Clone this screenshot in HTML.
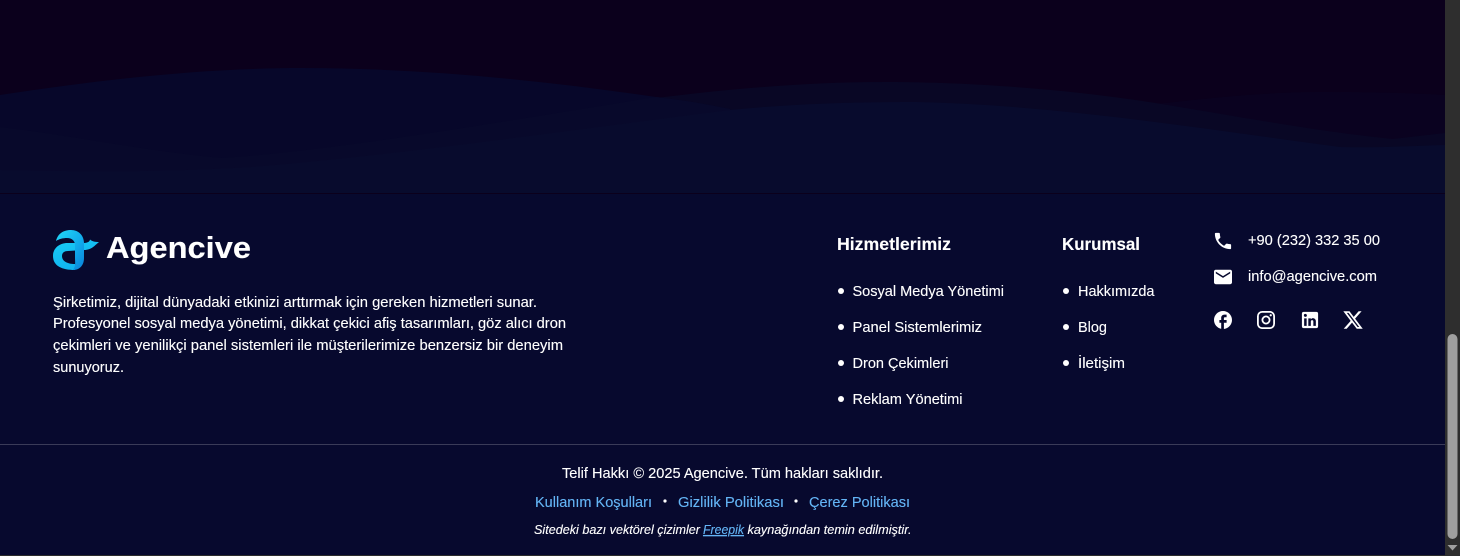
<!DOCTYPE html>
<html lang="tr">
<head>
<meta charset="utf-8">
<title>Agencive</title>
<style>
html,body{margin:0;padding:0;width:1460px;height:556px;overflow:hidden;background:#07092e}
svg{display:block;position:absolute;left:0;top:0}
text{font-family:"Liberation Sans",sans-serif;fill:#fff;white-space:pre;stroke:#fff;stroke-width:.12px}
.p,.l,.b{font-size:14.4px}
.h{font-size:17.6px;font-weight:700}
.a{fill:#64b5f6;stroke:#64b5f6}
.i{font-size:12.5px;font-style:italic}
</style>
</head>
<body>
<svg width="1460" height="556" viewBox="0 0 1460 556">
<defs>
<linearGradient id="g1" x1="0" y1="0" x2="1" y2="1"><stop offset="0" stop-color="#22d8f8"/><stop offset="0.6" stop-color="#10a8ea"/><stop offset="1" stop-color="#0a80d8"/></linearGradient>
<linearGradient id="g2" x1="0" y1="0" x2="0.6" y2="1"><stop offset="0" stop-color="#19cdf6"/><stop offset="1" stop-color="#0fb0ee"/></linearGradient>
</defs>
<rect width="1445" height="193" fill="#0b001c"/>
<path d="M1100 110C1180 102 1250 92 1320 92C1370 92 1410 93 1445 95V193H1100Z" fill="#0a0220"/>
<path d="M640 100C720 90 800 82 884 82C960 82 1060 88 1149 102C1230 115 1320 132 1393 139L1445 133V193H640Z" fill="#090725"/>
<path d="M0 95C100 80 200 68 302 68C420 68 540 80 656 97C690 101 710 105 730 109L730 193H0Z" fill="#07072a"/>
<path d="M0 127C70 135 150 152 223 158C340 150 500 122 656 97C690 101 710 105 730 109L760 193H0Z" fill="#08092b"/>
<path d="M0 170C90 172 170 172 251 167C400 155 570 130 730 110C790 104 850 102 916 102C1060 105 1210 130 1340 147C1380 148 1410 146 1445 145V193H0Z" fill="#080b2d"/>
<rect y="193" width="1445" height="363" fill="#07092e"/>
<rect y="193" width="1445" height="1" fill="#0b001c"/>
<rect y="444" width="1445" height="1" fill="#3a3b58"/>
<rect y="555" width="1445" height="1" fill="#2c2c2c"/>

<path d="M53 256C53 249 58 244 66 243L84 243C88 243 90 241 90 239.500C92 241.500 95 242 99 242C95 245 92 250 84 250L68 251C64 251 62 253 62 256C62 261 67 264 75 264L75 270C62 270 53 266 53 256Z" fill="url(#g2)"/>
<path d="M56 241C58 233 64 230 71 230C79 230 84 236 84 243L84 258C84 265 80 270 73 270C76 266 75 262 75 258L75 245C75 241 72 238 67 238C63 238 59 239 56 241Z" fill="url(#g1)"/>
<text x="106" y="258" font-size="31" font-weight="700" textLength="145" lengthAdjust="spacingAndGlyphs">Agencive</text>

<text class="p" x="53" y="307" textLength="484" lengthAdjust="spacingAndGlyphs">Şirketimiz, dijital dünyadaki etkinizi arttırmak için gereken hizmetleri sunar.</text>
<text class="p" x="53" y="328" textLength="513" lengthAdjust="spacingAndGlyphs">Profesyonel sosyal medya yönetimi, dikkat çekici afiş tasarımları, göz alıcı dron</text>
<text class="p" x="53" y="350" textLength="510" lengthAdjust="spacingAndGlyphs">çekimleri ve yenilikçi panel sistemleri ile müşterilerimize benzersiz bir deneyim</text>
<text class="p" x="53" y="372" textLength="71" lengthAdjust="spacingAndGlyphs">sunuyoruz.</text>

<text class="h" x="837" y="250" textLength="114" lengthAdjust="spacingAndGlyphs">Hizmetlerimiz</text>
<text class="h" x="1062" y="250" textLength="78" lengthAdjust="spacingAndGlyphs">Kurumsal</text>

<g fill="#fff">
<circle cx="841" cy="291" r="3"/><circle cx="841" cy="327" r="3"/><circle cx="841" cy="363" r="3"/><circle cx="841" cy="399" r="3"/>
<circle cx="1066" cy="291" r="3"/><circle cx="1066" cy="327" r="3"/><circle cx="1066" cy="363" r="3"/>
<circle cx="665" cy="501" r="1.6"/><circle cx="796" cy="501" r="1.6"/>
</g>
<text class="l" x="852.5" y="296" textLength="151.5" lengthAdjust="spacingAndGlyphs">Sosyal Medya Yönetimi</text>
<text class="l" x="852.5" y="332" textLength="129.5" lengthAdjust="spacingAndGlyphs">Panel Sistemlerimiz</text>
<text class="l" x="852.5" y="368" textLength="96" lengthAdjust="spacingAndGlyphs">Dron Çekimleri</text>
<text class="l" x="852.5" y="404" textLength="110" lengthAdjust="spacingAndGlyphs">Reklam Yönetimi</text>
<text class="l" x="1078" y="296" textLength="76.500" lengthAdjust="spacingAndGlyphs">Hakkımızda</text>
<text class="l" x="1078" y="332" textLength="29" lengthAdjust="spacingAndGlyphs">Blog</text>
<text class="l" x="1078" y="368" textLength="47" lengthAdjust="spacingAndGlyphs">İletişim</text>

<text class="l" x="1248" y="245" textLength="132" lengthAdjust="spacingAndGlyphs">+90 (232) 332 35 00</text>
<text class="l" x="1248" y="281" textLength="129" lengthAdjust="spacingAndGlyphs">info@agencive.com</text>

<g fill="#fff">
<path transform="translate(1212.200 230.200) scale(.9)" d="M6.62 10.79c1.44 2.83 3.76 5.14 6.59 6.59l2.2-2.2c.27-.27.67-.36 1.02-.24 1.12.37 2.33.57 3.57.57.55 0 1 .45 1 1V20c0 .55-.45 1-1 1-9.39 0-17-7.61-17-17 0-.55.45-1 1-1h3.5c.55 0 1 .45 1 1 0 1.25.2 2.45.57 3.57.11.35.03.74-.25 1.02l-2.2 2.2z"/>
<path transform="translate(1212.200 266.200) scale(.9)" d="M20 4H4c-1.1 0-1.99.9-1.99 2L2 18c0 1.1.9 2 2 2h16c1.1 0 2-.9 2-2V6c0-1.1-.9-2-2-2zm0 4l-8 5-8-5V6l8 5 8-5v2z"/>
<path transform="translate(1212.200 309.200) scale(.9)" d="M22 12c0-5.52-4.48-10-10-10S2 6.48 2 12c0 4.84 3.44 8.87 8 9.8V15H8v-3h2V9.5C10 7.57 11.57 6 13.5 6H16v3h-2c-.55 0-1 .45-1 1v2h3v3h-3v6.95c5.05-.5 9-4.76 9-9.95z"/>
<path transform="translate(1255.200 309.200) scale(.9)" d="M7.8 2h8.4C19.4 2 22 4.6 22 7.8v8.4a5.8 5.8 0 0 1-5.8 5.8H7.8C4.6 22 2 19.4 2 16.2V7.8A5.8 5.8 0 0 1 7.8 2m-.2 2A3.6 3.6 0 0 0 4 7.6v8.8C4 18.39 5.61 20 7.6 20h8.8a3.6 3.6 0 0 0 3.6-3.6V7.6C20 5.61 18.39 4 16.4 4H7.6m9.65 1.5a1.25 1.25 0 0 1 1.25 1.25A1.25 1.25 0 0 1 17.25 8 1.25 1.25 0 0 1 16 6.75a1.25 1.25 0 0 1 1.25-1.25M12 7a5 5 0 0 1 5 5 5 5 0 0 1-5 5 5 5 0 0 1-5-5 5 5 0 0 1 5-5m0 2a3 3 0 0 0-3 3 3 3 0 0 0 3 3 3 3 0 0 0 3-3 3 3 0 0 0-3-3z"/>
<path transform="translate(1299.200 309.200) scale(.9)" d="M19 3a2 2 0 0 1 2 2v14a2 2 0 0 1-2 2H5a2 2 0 0 1-2-2V5a2 2 0 0 1 2-2h14m-.5 15.5v-5.3a3.26 3.26 0 0 0-3.26-3.26c-.85 0-1.84.52-2.32 1.3v-1.11h-2.79v8.37h2.79v-4.93c0-.77.62-1.4 1.39-1.4a1.4 1.4 0 0 1 1.4 1.4v4.93h2.79M6.88 8.56a1.68 1.68 0 0 0 1.68-1.68c0-.93-.75-1.69-1.68-1.69a1.69 1.69 0 0 0-1.69 1.69c0 .93.76 1.68 1.69 1.68m1.39 9.94v-8.37H5.5v8.37h2.77z"/>
<path transform="translate(1342.200 309.200) scale(.9)" d="M18.244 2.25h3.308l-7.227 8.26 8.502 11.24H16.17l-5.214-6.817L4.99 21.75H1.68l7.73-8.835L1.254 2.25H8.08l4.713 6.231zm-1.161 17.52h1.833L7.084 4.126H5.117z"/>
</g>

<text class="b" x="562" y="478" textLength="321" lengthAdjust="spacingAndGlyphs">Telif Hakkı © 2025 Agencive. Tüm hakları saklıdır.</text>
<text class="b a" x="535" y="507" textLength="117" lengthAdjust="spacingAndGlyphs">Kullanım Koşulları</text>
<text class="b a" x="678" y="507" textLength="106" lengthAdjust="spacingAndGlyphs">Gizlilik Politikası</text>
<text class="b a" x="809" y="507" textLength="101" lengthAdjust="spacingAndGlyphs">Çerez Politikası</text>
<text class="i" x="534" y="534" textLength="166" lengthAdjust="spacingAndGlyphs">Sitedeki bazı vektörel çizimler</text>
<text class="i a" x="703" y="534" textLength="41" lengthAdjust="spacingAndGlyphs" text-decoration="underline">Freepik</text>
<text class="i" x="747.500" y="534" textLength="164" lengthAdjust="spacingAndGlyphs">kaynağından temin edilmiştir.</text>

<rect x="1445" y="0" width="15" height="556" fill="#2e2e2e"/>
<rect x="1447.500" y="334" width="10" height="205" rx="5" fill="#9f9f9f"/>
<path d="M1447.500 545H1457.500L1452.500 550.500Z" fill="#9f9f9f"/>
</svg>
</body>
</html>
